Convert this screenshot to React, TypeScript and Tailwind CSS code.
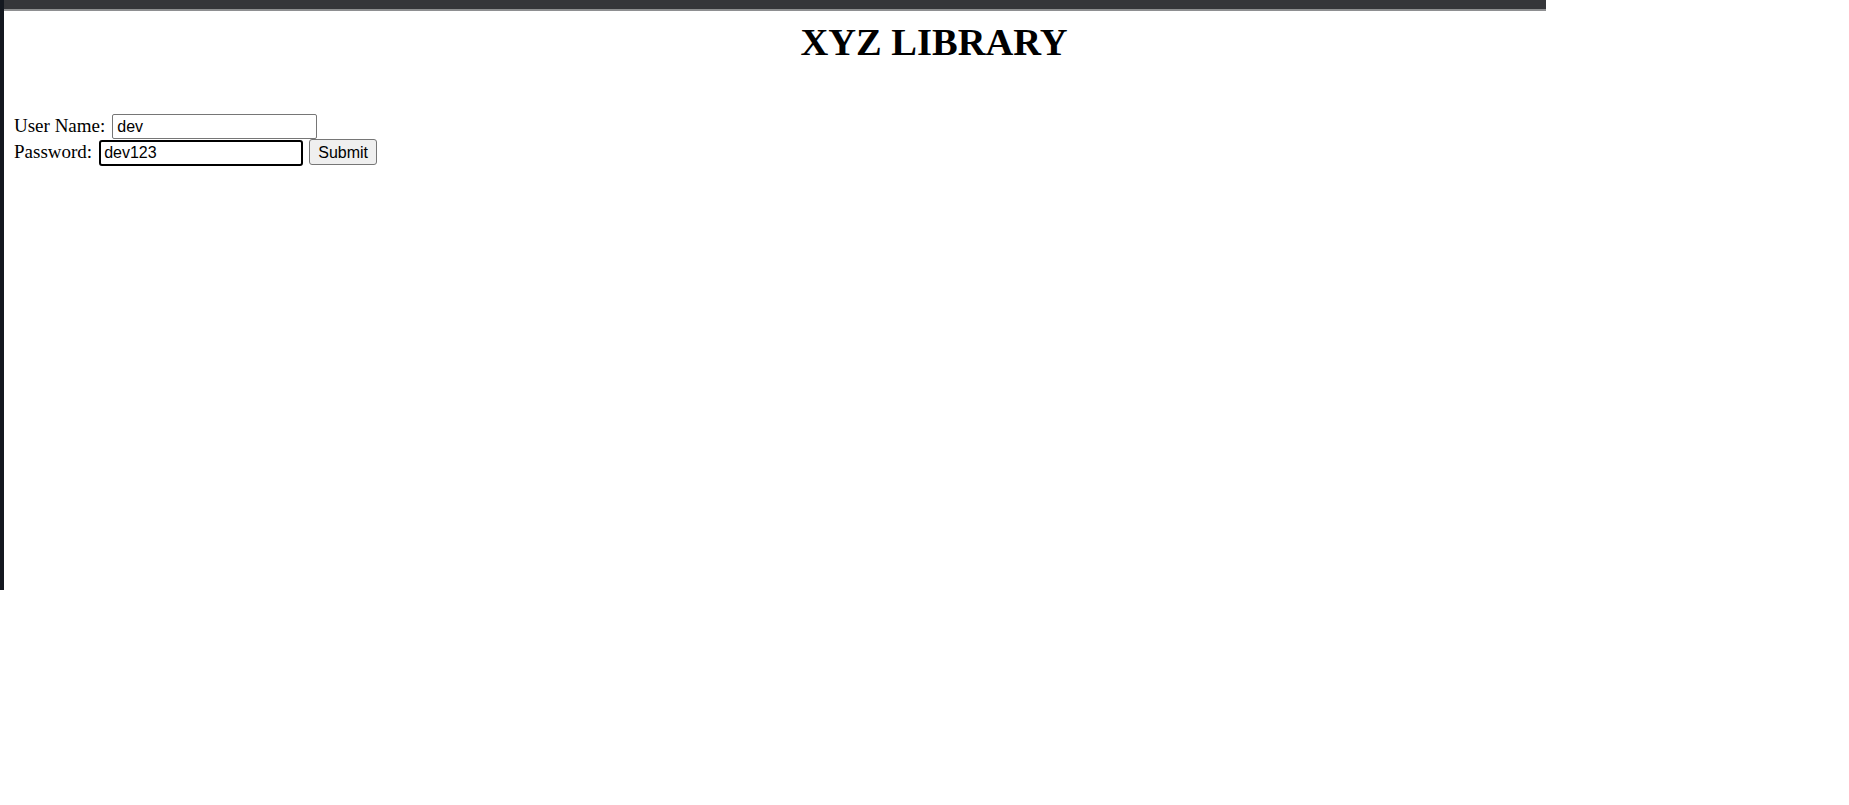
import React from "react";

const App = () => {
  return (
    <div className="min-h-[805px] w-full bg-white font-['Liberation_Serif',serif] text-black">
      <div className="flex h-[590px] w-[1546px] flex-col border-l-4 border-[#141820]">
        <div className="h-[11px] border-b-2 border-[#8e8f91] bg-[#35363a]" />

        <h1 className="mt-[10px] pl-[318px] text-center text-[38.5px] font-bold leading-[42px]">
          XYZ LIBRARY
        </h1>

        <form
          className="mt-[51px] flex flex-col pl-[10px] text-[19px] leading-[21px]"
          onSubmit={(e) => e.preventDefault()}
        >
          <div className="flex h-[25px] items-baseline">
            <label className="mr-[7px]">User Name:</label>
            <input
              type="text"
              defaultValue="dev"
              className="h-[25px] w-[205px] rounded-[2px] border border-[#767676] px-[4px] font-['Liberation_Sans',sans-serif] text-[16px] outline-none"
            />
          </div>
          <div className="flex h-[26px] items-baseline">
            <label className="mr-[7px]">Password:</label>
            <input
              type="text"
              defaultValue="dev123"
              className="h-[26px] w-[204px] rounded-[3px] border-2 border-black px-[3px] font-['Liberation_Sans',sans-serif] text-[16px] outline-none"
            />
            <button
              type="submit"
              className="ml-[6px] h-[26px] w-[68px] rounded-[3px] border border-[#767676] bg-[#efefef] font-['Liberation_Sans',sans-serif] text-[16px] text-black"
            >
              Submit
            </button>
          </div>
        </form>
      </div>
    </div>
  );
};

export default App;
